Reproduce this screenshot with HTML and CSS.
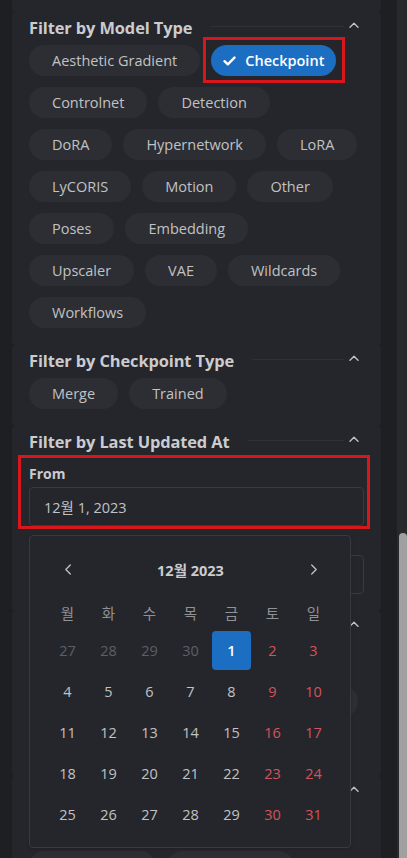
FILE: index.html
```html
<!DOCTYPE html>
<html lang="ko">
<head>
<meta charset="utf-8">
<title>Filters</title>
<link rel="stylesheet" href="styles.css">
</head>
<body>
<div class="layout">
  <aside class="sidebar">
    <div class="card card--stub"></div>

    <section class="card">
      <header class="card-head">
        <h3 class="card-title">Filter by Model Type</h3>
        <span class="rule"></span>
        <span class="toggle"><svg width="10" height="6" viewBox="0 0 10 6"><path d="M1 5.2 L5 1.2 L9 5.2" fill="none" stroke="#c1c2c5" stroke-width="1.4" stroke-linecap="round" stroke-linejoin="round"/></svg></span>
      </header>
      <div class="chips">
        <button class="chip">Aesthetic Gradient</button>
        <button class="chip chip--active annotated"><svg class="check" width="13" height="10" viewBox="0 0 13 10"><path d="M1.5 5.2 L4.8 8.3 L11.5 1.6" fill="none" stroke="#fff" stroke-width="2.4" stroke-linecap="round" stroke-linejoin="round"/></svg>Checkpoint</button>
        <button class="chip">Controlnet</button>
        <button class="chip">Detection</button>
        <button class="chip">DoRA</button>
        <button class="chip">Hypernetwork</button>
        <button class="chip">LoRA</button>
        <button class="chip">LyCORIS</button>
        <button class="chip">Motion</button>
        <button class="chip">Other</button>
        <button class="chip">Poses</button>
        <button class="chip">Embedding</button>
        <button class="chip">Upscaler</button>
        <button class="chip">VAE</button>
        <button class="chip">Wildcards</button>
        <button class="chip">Workflows</button>
      </div>
    </section>

    <section class="card">
      <header class="card-head">
        <h3 class="card-title">Filter by Checkpoint Type</h3>
        <span class="rule"></span>
        <span class="toggle"><svg width="10" height="6" viewBox="0 0 10 6"><path d="M1 5.2 L5 1.2 L9 5.2" fill="none" stroke="#c1c2c5" stroke-width="1.4" stroke-linecap="round" stroke-linejoin="round"/></svg></span>
      </header>
      <div class="chips">
        <button class="chip">Merge</button>
        <button class="chip">Trained</button>
      </div>
    </section>

    <section class="card">
      <header class="card-head">
        <h3 class="card-title">Filter by Last Updated At</h3>
        <span class="rule"></span>
        <span class="toggle"><svg width="10" height="6" viewBox="0 0 10 6"><path d="M1 5.2 L5 1.2 L9 5.2" fill="none" stroke="#c1c2c5" stroke-width="1.4" stroke-linecap="round" stroke-linejoin="round"/></svg></span>
      </header>
      <div class="field field--annotated">
        <label class="field-label">From</label>
        <div class="input">12월 1, 2023</div>

        <div class="popover">
          <div class="cal-head">
            <span class="cal-nav"><svg width="8" height="11" viewBox="0 0 8 11"><path d="M6.3 1 L1.8 5.5 L6.3 10" fill="none" stroke="#c1c2c5" stroke-width="1.3" stroke-linecap="round" stroke-linejoin="round"/></svg></span>
            <span class="cal-title">12월 2023</span>
            <span class="cal-nav"><svg width="8" height="11" viewBox="0 0 8 11"><path d="M1.7 1 L6.2 5.5 L1.7 10" fill="none" stroke="#c1c2c5" stroke-width="1.3" stroke-linecap="round" stroke-linejoin="round"/></svg></span>
          </div>
          <div class="cal-weekdays">
            <span>월</span><span>화</span><span>수</span><span>목</span><span>금</span><span>토</span><span>일</span>
          </div>
          <div class="cal-days">
            <span class="day day--out">27</span><span class="day day--out">28</span><span class="day day--out">29</span><span class="day day--out">30</span><span class="day day--selected">1</span><span class="day day--weekend">2</span><span class="day day--weekend">3</span>
            <span class="day">4</span><span class="day">5</span><span class="day">6</span><span class="day">7</span><span class="day">8</span><span class="day day--weekend">9</span><span class="day day--weekend">10</span>
            <span class="day">11</span><span class="day">12</span><span class="day">13</span><span class="day">14</span><span class="day">15</span><span class="day day--weekend">16</span><span class="day day--weekend">17</span>
            <span class="day">18</span><span class="day">19</span><span class="day">20</span><span class="day">21</span><span class="day">22</span><span class="day day--weekend">23</span><span class="day day--weekend">24</span>
            <span class="day">25</span><span class="day">26</span><span class="day">27</span><span class="day">28</span><span class="day">29</span><span class="day day--weekend">30</span><span class="day day--weekend">31</span>
          </div>
        </div>
      </div>
      <div class="field field--second">
        <span class="field-label"></span>
        <div class="input"></div>
      </div>
    </section>

    <section class="card">
      <header class="card-head">
        <span class="rule rule--full"></span>
        <span class="toggle"><svg width="10" height="6" viewBox="0 0 10 6"><path d="M1 5.2 L5 1.2 L9 5.2" fill="none" stroke="#c1c2c5" stroke-width="1.4" stroke-linecap="round" stroke-linejoin="round"/></svg></span>
      </header>
      <div class="chips">
        <span class="chip chip--blank w90"></span>
        <span class="chip chip--blank w100"></span>
        <span class="chip chip--blank w80"></span>
        <span class="chip chip--blank w100"></span>
        <span class="chip chip--blank w110"></span>
        <span class="chip chip--blank w97"></span>
        <span class="chip chip--blank w120"></span>
        <span class="chip chip--blank w110"></span>
      </div>
    </section>

    <section class="card">
      <header class="card-head">
        <span class="rule rule--full"></span>
        <span class="toggle"><svg width="10" height="6" viewBox="0 0 10 6"><path d="M1 5.2 L5 1.2 L9 5.2" fill="none" stroke="#c1c2c5" stroke-width="1.4" stroke-linecap="round" stroke-linejoin="round"/></svg></span>
      </header>
      <div class="chips">
        <span class="chip chip--blank w120"></span>
        <span class="chip chip--blank w100"></span>
        <span class="chip chip--blank w70"></span>
        <span class="chip chip--blank w127"></span>
        <span class="chip chip--blank w127"></span>
      </div>
    </section>
  </aside>
  <div class="scrollbar"><div class="thumb"></div></div>
</div>
</body>
</html>
```

FILE: styles.css
```css
* { box-sizing: border-box; }

html, body {
  margin: 0;
  padding: 0;
  height: 858px;
  overflow: hidden;
  background: #1e1f22;
  font-family: "Open Sans", "Noto Sans CJK KR", sans-serif;
  color: #c1c2c5;
}

.layout {
  display: flex;
  height: 858px;
}

.sidebar {
  width: 397px;
  height: 858px;
  padding: 0 16px 0 12px;
  display: flex;
  flex-direction: column;
  overflow: hidden;
  flex-shrink: 0;
}

.card {
  background: #25262b;
  border-radius: 4px;
  padding: 0 17px 17px 17px;
  flex-shrink: 0;
}

.card--stub {
  height: 12px;
  padding: 0;
  border-radius: 0 0 4px 4px;
}

.card-head {
  height: 30px;
  display: flex;
  align-items: center;
  margin-bottom: 3px;
}

.card-title {
  margin: 0;
  font-size: 16.4px;
  font-weight: 700;
  color: #cbcccf;
  white-space: nowrap;
  letter-spacing: -0.1px;
}

.rule {
  flex: 1;
  height: 1px;
  background: #2f3136;
  margin: 0 0 0 18px;
  position: relative;
  top: -1px;
}

.rule--full {
  margin-left: 180px;
}

.toggle {
  width: 20px;
  height: 20px;
  display: flex;
  align-items: center;
  justify-content: center;
  position: relative;
  top: -2px;
}

.chips {
  display: flex;
  flex-wrap: wrap;
  gap: 11px;
}

.chip {
  height: 31px;
  padding: 0 23px;
  border: 0;
  border-radius: 16px;
  background: #2c2e33;
  color: #c1c2c5;
  font-family: "Open Sans", sans-serif;
  font-size: 14.5px;
  display: inline-flex;
  align-items: center;
  white-space: nowrap;
}

.chip--blank { padding: 0; }
.w70 { width: 70px; }
.w80 { width: 80px; }
.w90 { width: 90px; }
.w97 { width: 97px; }
.w100 { width: 100px; }
.w110 { width: 110px; }
.w120 { width: 120px; }
.w127 { width: 127px; }

.chip--active {
  background: #1b6ec2;
  color: #fff;
  padding: 0 12px 0 12px;
  gap: 9px;
  font-weight: 600;
}

.annotated {
  position: relative;
}

.annotated::after {
  content: "";
  position: absolute;
  left: -8px;
  right: -9px;
  top: -8px;
  bottom: -7px;
  border: 3px solid #d9161c;
}

.field {
  position: relative;
  margin-top: 8px;
}

.field--second {
  margin-top: 6px;
}

.field--annotated::after {
  content: "";
  position: absolute;
  left: -11px;
  right: -6px;
  top: -9px;
  bottom: -3px;
  border: 3px solid #d9161c;
  pointer-events: none;
}

.field-label {
  display: block;
  height: 20px;
  font-size: 14px;
  font-weight: 700;
  line-height: 20px;
  color: #cbcccf;
  margin-bottom: 3px;
}

.input {
  height: 39px;
  border: 1px solid #373a40;
  border-radius: 4px;
  background: #25262b;
  padding: 0 14px;
  display: flex;
  align-items: center;
  font-size: 14.5px;
  color: #c1c2c5;
}

.popover {
  position: absolute;
  top: calc(100% + 9px);
  left: 0;
  width: 322px;
  z-index: 10;
  background: #25262b;
  border: 1px solid #373a40;
  border-radius: 4px;
  padding: 16px 16px 12px 17px;
  box-shadow: 0 1px 3px rgba(0,0,0,0.15);
}

.cal-head {
  display: grid;
  grid-template-columns: 41px 1fr 41px;
  height: 34px;
  align-items: center;
  margin-bottom: 8px;
}

.cal-nav {
  display: flex;
  justify-content: center;
  align-items: center;
}

.cal-title {
  text-align: center;
  font-weight: 700;
  font-size: 14.5px;
  color: #cbcccf;
}

.cal-weekdays {
  display: grid;
  grid-template-columns: repeat(7, 41px);
  height: 36px;
  align-items: center;
  justify-items: center;
  font-size: 14.5px;
  color: #909296;
}

.cal-days {
  display: grid;
  grid-template-columns: repeat(7, 41px);
  grid-auto-rows: 41px;
}

.day {
  margin: 1px;
  border-radius: 4px;
  display: flex;
  align-items: center;
  justify-content: center;
  font-size: 14.5px;
  color: #c1c2c5;
}

.day--out { color: #5c5f66; }
.day--weekend { color: #d2545a; }
.day--selected {
  background: #1b6ec2;
  color: #fff;
  font-weight: 600;
}

.scrollbar {
  width: 10px;
  height: 858px;
  background: #28292c;
  padding: 533px 0 0 2px;
  display: flex;
  flex-direction: column;
}

.thumb {
  flex: 1;
  background: #a0a0a0;
  border-radius: 4px 4px 0 0;
}
```
